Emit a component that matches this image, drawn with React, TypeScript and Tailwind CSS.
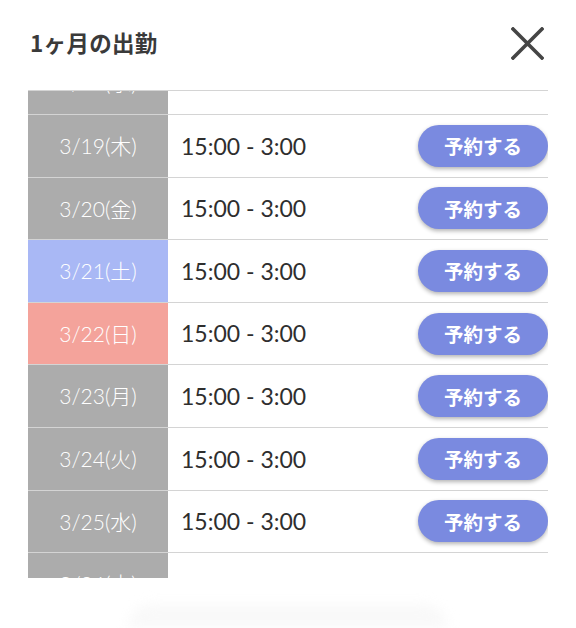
type Shift = { date: string; kind: "weekday" | "sat" | "sun"; time?: string };

const SHIFTS: Shift[] = [
  { date: "3/18(水)", kind: "weekday" },
  { date: "3/19(木)", kind: "weekday", time: "15:00 - 3:00" },
  { date: "3/20(金)", kind: "weekday", time: "15:00 - 3:00" },
  { date: "3/21(土)", kind: "sat", time: "15:00 - 3:00" },
  { date: "3/22(日)", kind: "sun", time: "15:00 - 3:00" },
  { date: "3/23(月)", kind: "weekday", time: "15:00 - 3:00" },
  { date: "3/24(火)", kind: "weekday", time: "15:00 - 3:00" },
  { date: "3/25(水)", kind: "weekday", time: "15:00 - 3:00" },
  { date: "3/26(木)", kind: "weekday" },
];

const CELL_BG = {
  weekday: "bg-[#acacac]",
  sat: "bg-[#a9b8f5]",
  sun: "bg-[#f4a39b]",
};

export default function App() {
  return (
    <div
      className="w-[576px] h-[628px] bg-white overflow-hidden flex flex-col"
      style={{ fontFamily: '"Lato", "Noto Sans CJK JP", sans-serif' }}
    >
      {/* header */}
      <div className="flex items-center justify-between pl-[30px] pr-[32px] h-[90px] shrink-0 pb-[4px]">
        <h2 className="text-[22.5px] font-bold text-[#3a3a3a] tracking-[0.3px]" style={{ fontFamily: '"Noto Sans CJK JP", sans-serif' }}>
          1ヶ月の出勤
        </h2>
        <svg width="33" height="33" viewBox="0 0 33 33" className="text-[#454545]">
          <path d="M2 2 L31 31 M31 2 L2 31" stroke="currentColor" strokeWidth="3.6" strokeLinecap="square" fill="none" />
        </svg>
      </div>

      {/* shift list (scrolled) */}
      <div className="mx-[28px] border-t border-[#d4d4d4] h-[488px] overflow-hidden shrink-0">
        <div className="-mt-[38.6px]">
          {SHIFTS.map((s) => (
            <div key={s.date} className="flex items-center h-[62.6px] border-b border-[#d4d4d4]">
              <div
                className={`w-[140px] h-full flex items-center justify-center text-white text-[21px] font-light ${CELL_BG[s.kind]}`}
              >
                {s.date}
              </div>
              {s.time && (
                <>
                  <div className="pl-[13px] text-[23px] text-[#2e2e2e]">{s.time}</div>
                  <button
                    className="ml-auto h-[42px] w-[130px] rounded-full bg-[#7a8ae0] text-white text-[19.5px] font-bold shadow-[0_2px_4px_rgba(0,0,0,0.3)]"
                    style={{ fontFamily: '"Noto Sans CJK JP", sans-serif' }}
                  >
                    予約する
                  </button>
                </>
              )}
            </div>
          ))}
        </div>
      </div>

      {/* bottom area */}
      <div className="flex-1 flex justify-center items-end">
        <div className="w-[320px] h-[24px] bg-[#f9f9f9] rounded-t-[40px] blur-[6px]" />
      </div>
    </div>
  );
}
